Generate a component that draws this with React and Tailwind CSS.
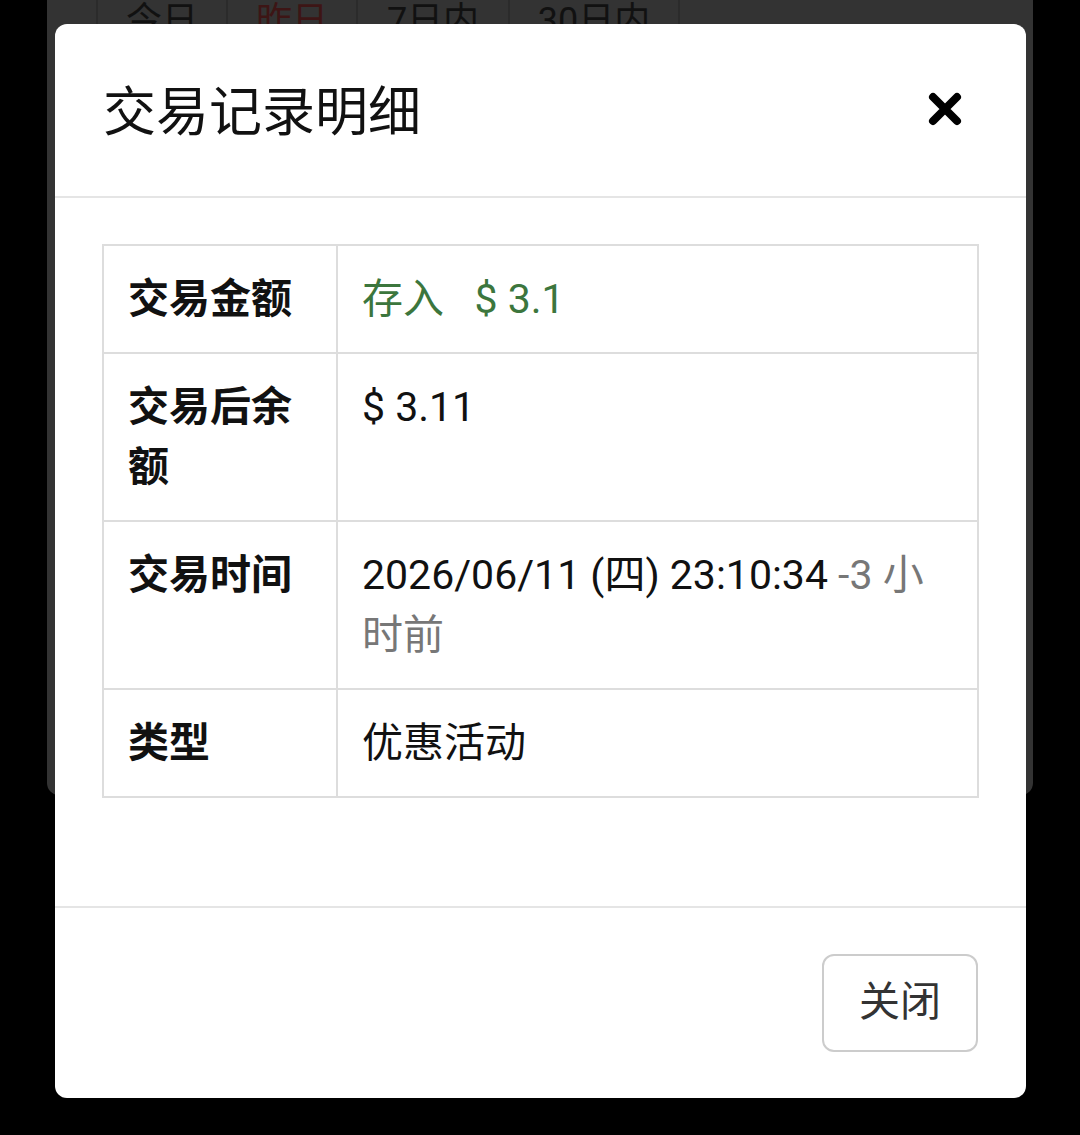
import React from "react";

const rows = [
  { label: "交易金额", value: <span className="text-[#3c763d]">存入&nbsp;&nbsp; $ 3.1</span> },
  { label: "交易后余额", value: <span>$ 3.11</span> },
  {
    label: "交易时间",
    value: (
      <span>
        2026/06/11 (四) 23:10:34 <span className="text-[#777]">-3 小时前</span>
      </span>
    ),
  },
  { label: "类型", value: <span>优惠活动</span> },
];

export default function App() {
  return (
    <div className="relative h-[1135px] w-[1080px] overflow-hidden bg-black font-['Roboto','Noto_Sans_CJK_SC',sans-serif]">
      {/* dimmed page behind */}
      <div className="mx-[47px] flex h-[795px] flex-col rounded-b-[12px] bg-[#333]">
        <div className="-mt-[19px] flex pl-[49px]">
          {[
            { t: "今日", w: "w-[130px]", c: "text-[#111]" },
            { t: "昨日", w: "w-[130px]", c: "text-[#3d1515]" },
            { t: "7日内", w: "w-[152px]", c: "text-[#111]" },
            { t: "30日内", w: "w-[172px]", c: "text-[#111]" },
          ].map((tab) => (
            <div
              key={tab.t}
              className={`${tab.w} ${tab.c} flex h-[80px] items-center justify-center border-l-2 border-[#2b2b2b] text-[36px] last:border-r-2`}
            >
              {tab.t}
            </div>
          ))}
        </div>
      </div>

      {/* modal */}
      <div className="absolute left-[55px] top-[24px] w-[971px] rounded-[12px] bg-white">
        <div className="flex h-[174px] items-center justify-between border-b-2 border-[#e5e5e5] pl-[48px] pr-[64px]">
          <h4 className="mt-[6px] text-[53px] font-normal leading-none text-[#111]">交易记录明细</h4>
          <svg width="34" height="34" viewBox="0 0 34 34" className="-mt-[2px]">
            <path d="M5 5 L29 29 M29 5 L5 29" stroke="#000" strokeWidth="8" strokeLinecap="round" />
          </svg>
        </div>

        <div className="px-[47px] pb-[108px] pt-[46px]">
          <table className="w-full border-collapse text-[41px] leading-[60px] text-[#111]">
            <tbody>
              {rows.map((r) => (
                <tr key={r.label}>
                  <th className="w-[234px] border-2 border-[#ddd] px-[24px] py-[23px] text-left align-top font-bold">
                    {r.label}
                  </th>
                  <td className="border-2 border-[#ddd] px-[24px] py-[23px] text-left align-top">{r.value}</td>
                </tr>
              ))}
            </tbody>
          </table>
        </div>

        <div className="flex justify-end border-t-2 border-[#e5e5e5] pb-[46px] pl-[48px] pr-[48px] pt-[46px]">
          <button className="flex h-[98px] w-[156px] items-center justify-center rounded-[12px] border-2 border-[#ccc] bg-white text-[41px] text-[#333]">
            关闭
          </button>
        </div>
      </div>
    </div>
  );
}
